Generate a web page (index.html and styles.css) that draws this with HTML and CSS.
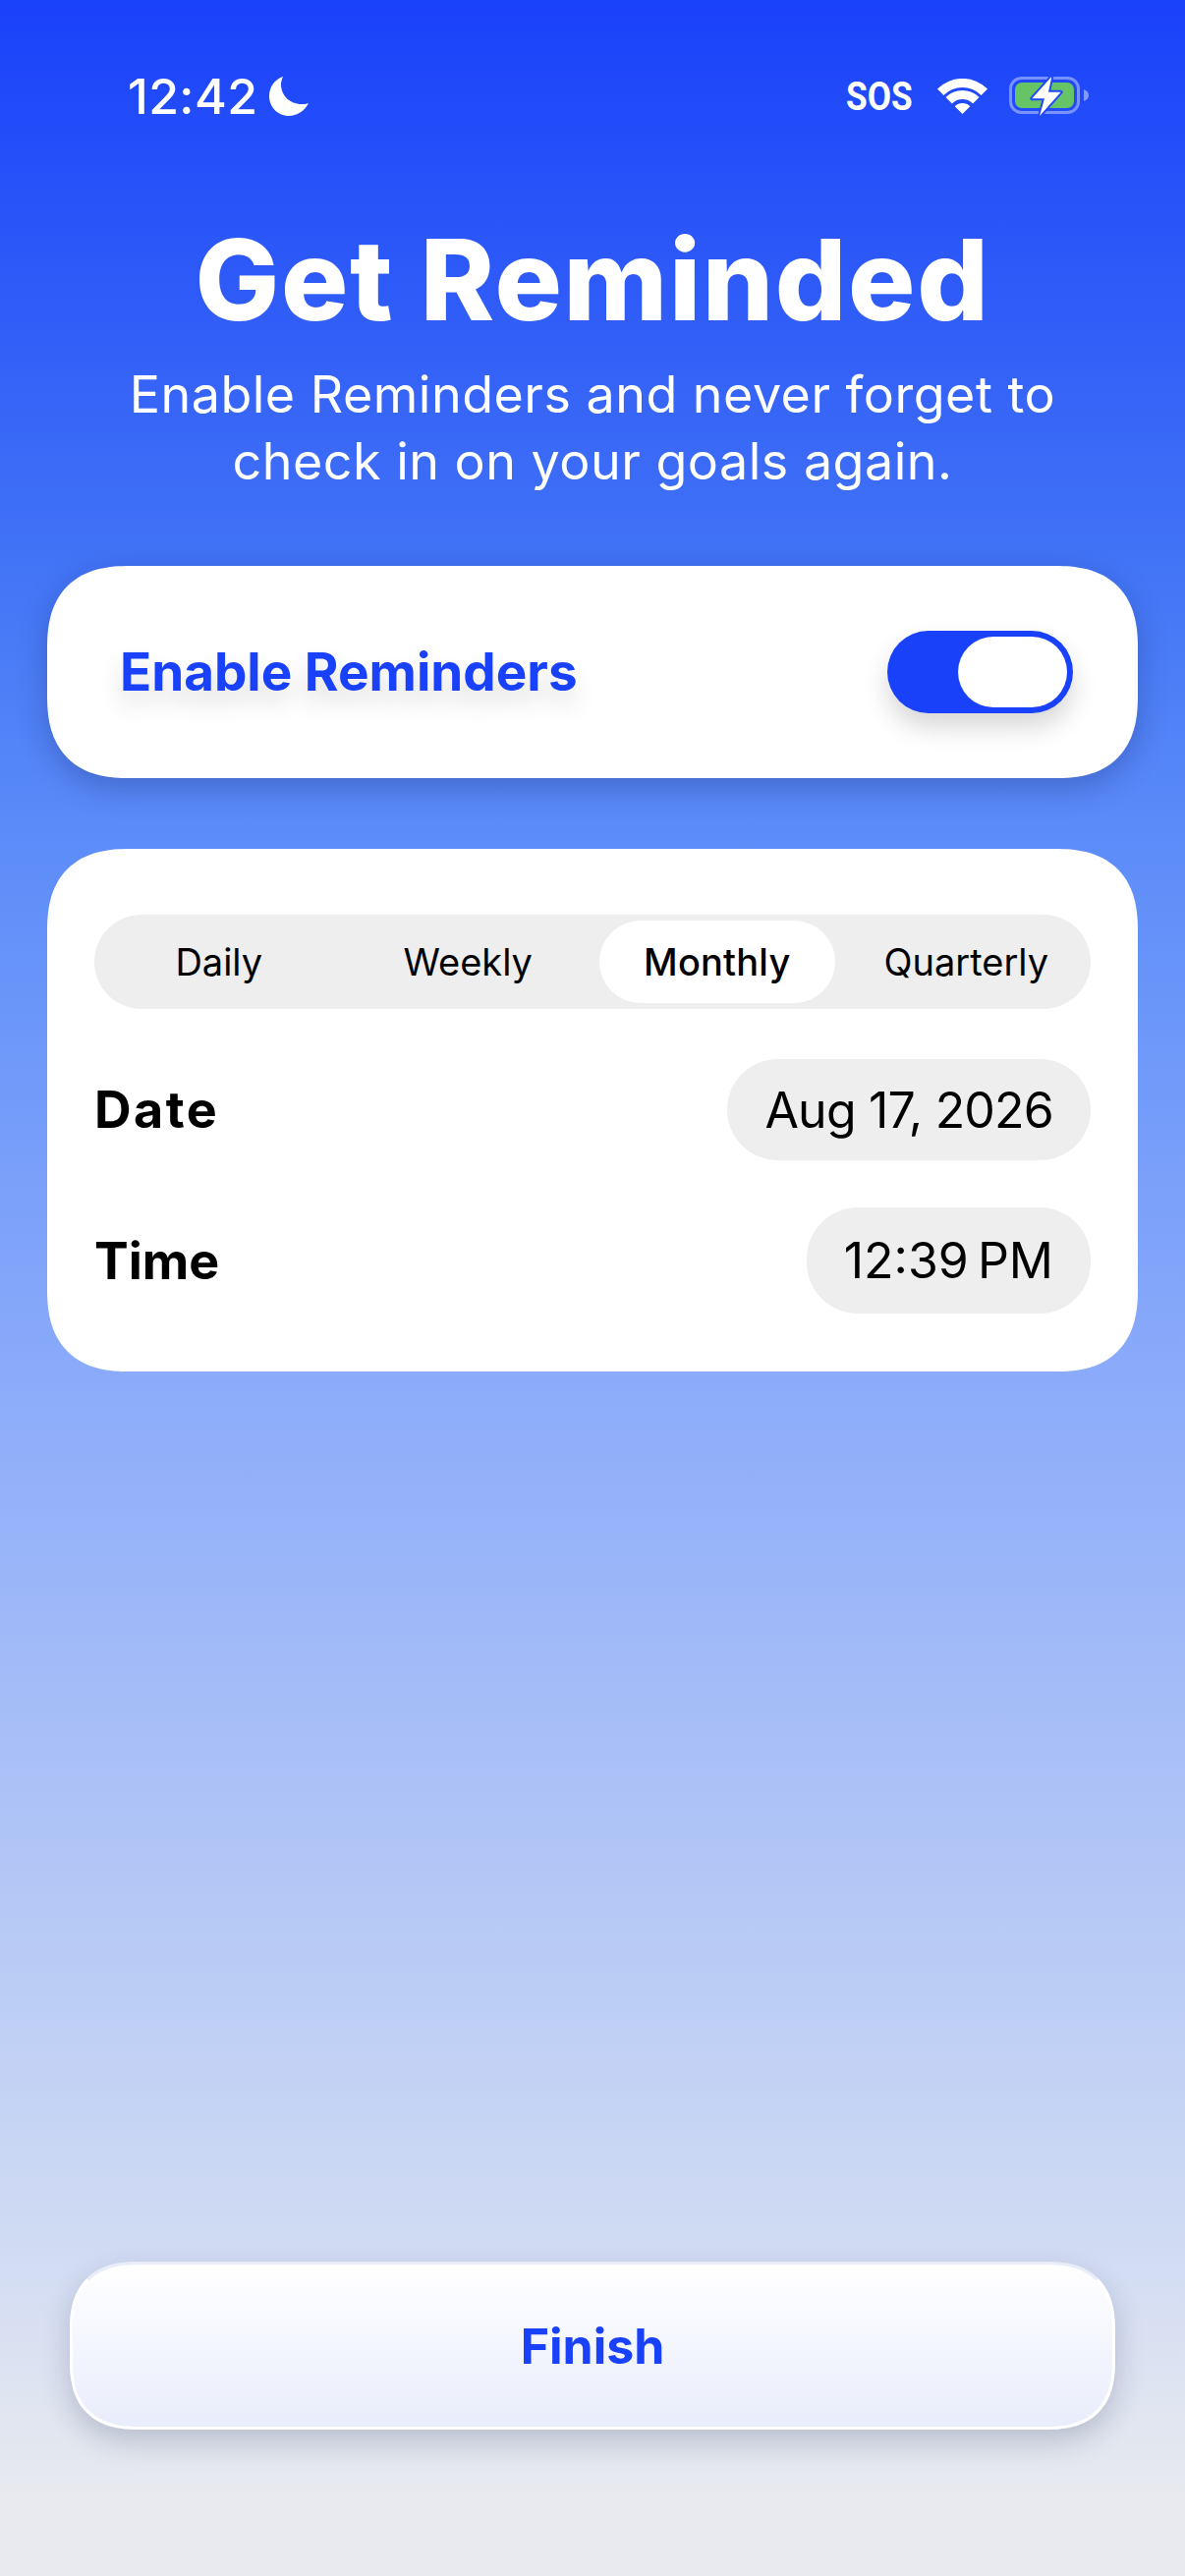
FILE: index.html
```html
<!DOCTYPE html>
<html lang="en">
<head>
    <meta charset="UTF-8">
    <meta name="viewport" content="width=device-width, initial-scale=1.0">
    <title>Get Reminded</title>
    <link rel="stylesheet" href="styles.css">
</head>
<body>
    <div class="screen">
        <div class="status-bar">
            <div class="status-left">
                <span class="clock">12:42</span>
                <svg class="moon" width="40" height="40" viewBox="0 0 40 40"><path fill="#fff" d="M14 0C5 3 0 11 0 20C0 31 9 40 20 40C28 40 36 35 40 27C38 28 35 28 33 28C21 28 12 19 12 8C12 5 13 2 14 0Z"/></svg>
            </div>
            <div class="status-right">
                <span class="sos">SOS</span>
                <svg class="wifi" width="51" height="36" viewBox="0 0 51 36"><path fill="#fff" d="M0 10.5A36 36 0 0 1 51 10.5L44.6 16.9A27 27 0 0 0 6.4 16.9ZM8.5 19A24 24 0 0 1 42.5 19L36.1 25.4A15 15 0 0 0 14.9 25.4ZM17.7 28.2A11 11 0 0 1 33.3 28.2L25.5 36Z"/></svg>
                <svg class="battery" width="82" height="42" viewBox="0 0 82 42">
                    <rect x="1.5" y="2.5" width="69" height="35" rx="11" fill="none" stroke="#fff" stroke-opacity=".4" stroke-width="3"/>
                    <rect x="6" y="7" width="60" height="26" rx="7" fill="#67c466"/>
                    <path fill="#fff" fill-opacity=".45" d="M76 14C79 15 81 17 81 20C81 23 79 25 76 26Z"/>
                    <path fill="#fff" stroke="#2049f8" stroke-width="4" stroke-linejoin="round" paint-order="stroke" d="M43.3 1L23.3 23.3H36L31 41L52.7 16.7H40Z"/>
                </svg>
            </div>
        </div>

        <div class="hero">
            <h1>Get Reminded</h1>
            <p>Enable Reminders and never forget to<br>check in on your goals again.</p>
        </div>

        <div class="card toggle-card">
            <span class="toggle-label">Enable Reminders</span>
            <div class="toggle"><div class="knob"></div></div>
        </div>

        <div class="card settings-card">
            <div class="segments">
                <div class="segment">Daily</div>
                <div class="segment">Weekly</div>
                <div class="segment active">Monthly</div>
                <div class="segment">Quarterly</div>
            </div>
            <div class="row date-row">
                <span class="row-label">Date</span>
                <span class="pill date-pill">Aug 17, 2026</span>
            </div>
            <div class="row time-row">
                <span class="row-label">Time</span>
                <span class="pill time-pill">12:39&#8201;PM</span>
            </div>
        </div>

        <button class="finish">Finish</button>
    </div>
</body>
</html>
```

FILE: styles.css
```css
* {
    box-sizing: border-box;
}
html, body {
    margin: 0;
    padding: 0;
}
.screen {
    width: 1206px;
    height: 2622px;
    display: flex;
    flex-direction: column;
    padding: 0 48px;
    overflow: hidden;
    font-family: Inter, sans-serif;
    background: linear-gradient(180deg, #1a41fa 0%, #4274f6 22%, #5d8df9 33%, #8aaafa 53%, #d0dbf3 87%, #e8eaef 97%);
}
.status-bar {
    height: 225px;
    padding: 71px 49px 0 82px;
    display: flex;
    justify-content: space-between;
    align-items: flex-start;
    flex-shrink: 0;
}
.status-left {
    display: flex;
    align-items: center;
    gap: 12px;
}
.clock {
    color: #fff;
    font-size: 50px;
    line-height: 54px;
    font-weight: 500;
    letter-spacing: 0.4px;
}
.status-right {
    display: flex;
    align-items: center;
    height: 54px;
}
.sos {
    display: inline-block;
    color: #fff;
    font-family: Roboto, sans-serif;
    font-weight: 700;
    font-size: 40px;
    width: 66px;
    margin-right: 27px;
    white-space: nowrap;
    transform: scaleX(0.88);
    transform-origin: left center;
}
.battery {
    margin-left: 22px;
}
.hero {
    text-align: center;
    color: #fff;
}
.hero h1 {
    margin: 0;
    font-size: 114px;
    line-height: 120px;
    font-weight: 800;
    letter-spacing: 1.6px;
}
.hero p {
    margin: 23px 0 0;
    font-size: 52px;
    line-height: 68px;
    font-weight: 400;
    letter-spacing: 0.5px;
}
.card {
    background: white;
    border-radius: 84px;
    corner-shape: superellipse(1.3);
    box-shadow: 0 10px 30px rgba(10,20,70,0.25);
}
.toggle-card {
    height: 216px;
    margin-top: 72px;
    padding: 0 66px 0 74px;
    display: flex;
    justify-content: space-between;
    align-items: center;
    flex-shrink: 0;
}
.toggle-label {
    color: #1a41fa;
    font-size: 53px;
    font-weight: 700;
    text-shadow: 0 14px 24px rgba(0,0,0,0.14);
}
.toggle {
    width: 189px;
    height: 84px;
    padding: 6px;
    border-radius: 42px;
    background: #1a41fa;
    display: flex;
    justify-content: flex-end;
    box-shadow: 0 14px 26px rgba(0,0,0,0.16);
}
.knob {
    width: 111px;
    height: 72px;
    border-radius: 36px;
    background: white;
}
.settings-card {
    height: 532px;
    margin-top: 72px;
    padding: 67px 48px 0;
    box-shadow: none;
    flex-shrink: 0;
}
.segments {
    height: 96px;
    padding: 6px 0;
    border-radius: 48px;
    background: #eeeeee;
    display: grid;
    grid-template-columns: repeat(4, 1fr);
}
.segment {
    display: flex;
    align-items: center;
    justify-content: center;
    font-size: 38px;
    color: #000;
    border-radius: 42px;
}
.segment.active {
    background: white;
    margin: 0 7px;
    font-weight: 500;
    letter-spacing: 0.2px;
}
.row {
    display: flex;
    justify-content: space-between;
    align-items: center;
}
.date-row {
    margin-top: 51px;
}
.time-row {
    margin-top: 48px;
}
.row-label {
    color: #000;
    font-size: 52px;
    font-weight: 700;
}
.date-row .row-label {
    letter-spacing: 2.5px;
}
.pill {
    display: flex;
    align-items: center;
    padding: 0 38px;
    border-radius: 52px;
    background: #eeeeee;
    font-size: 50px;
    color: #000;
}
.date-pill {
    height: 103px;
    letter-spacing: -0.8px;
}
.time-pill {
    height: 108px;
}
.finish {
    display: block;
    width: 1064px;
    height: 171px;
    margin: auto 0 149px 23px;
    flex-shrink: 0;
    border: 3px solid #fff;
    border-top-color: #e9edf8;
    border-radius: 70px;
    corner-shape: superellipse(1.3);
    background: linear-gradient(180deg, #ffffff 0%, #e9edfc 100%);
    box-shadow: 0 12px 30px rgba(20,30,70,0.2);
    color: #1a41fa;
    font-family: Inter, sans-serif;
    font-size: 50px;
    font-weight: 700;
}
```
